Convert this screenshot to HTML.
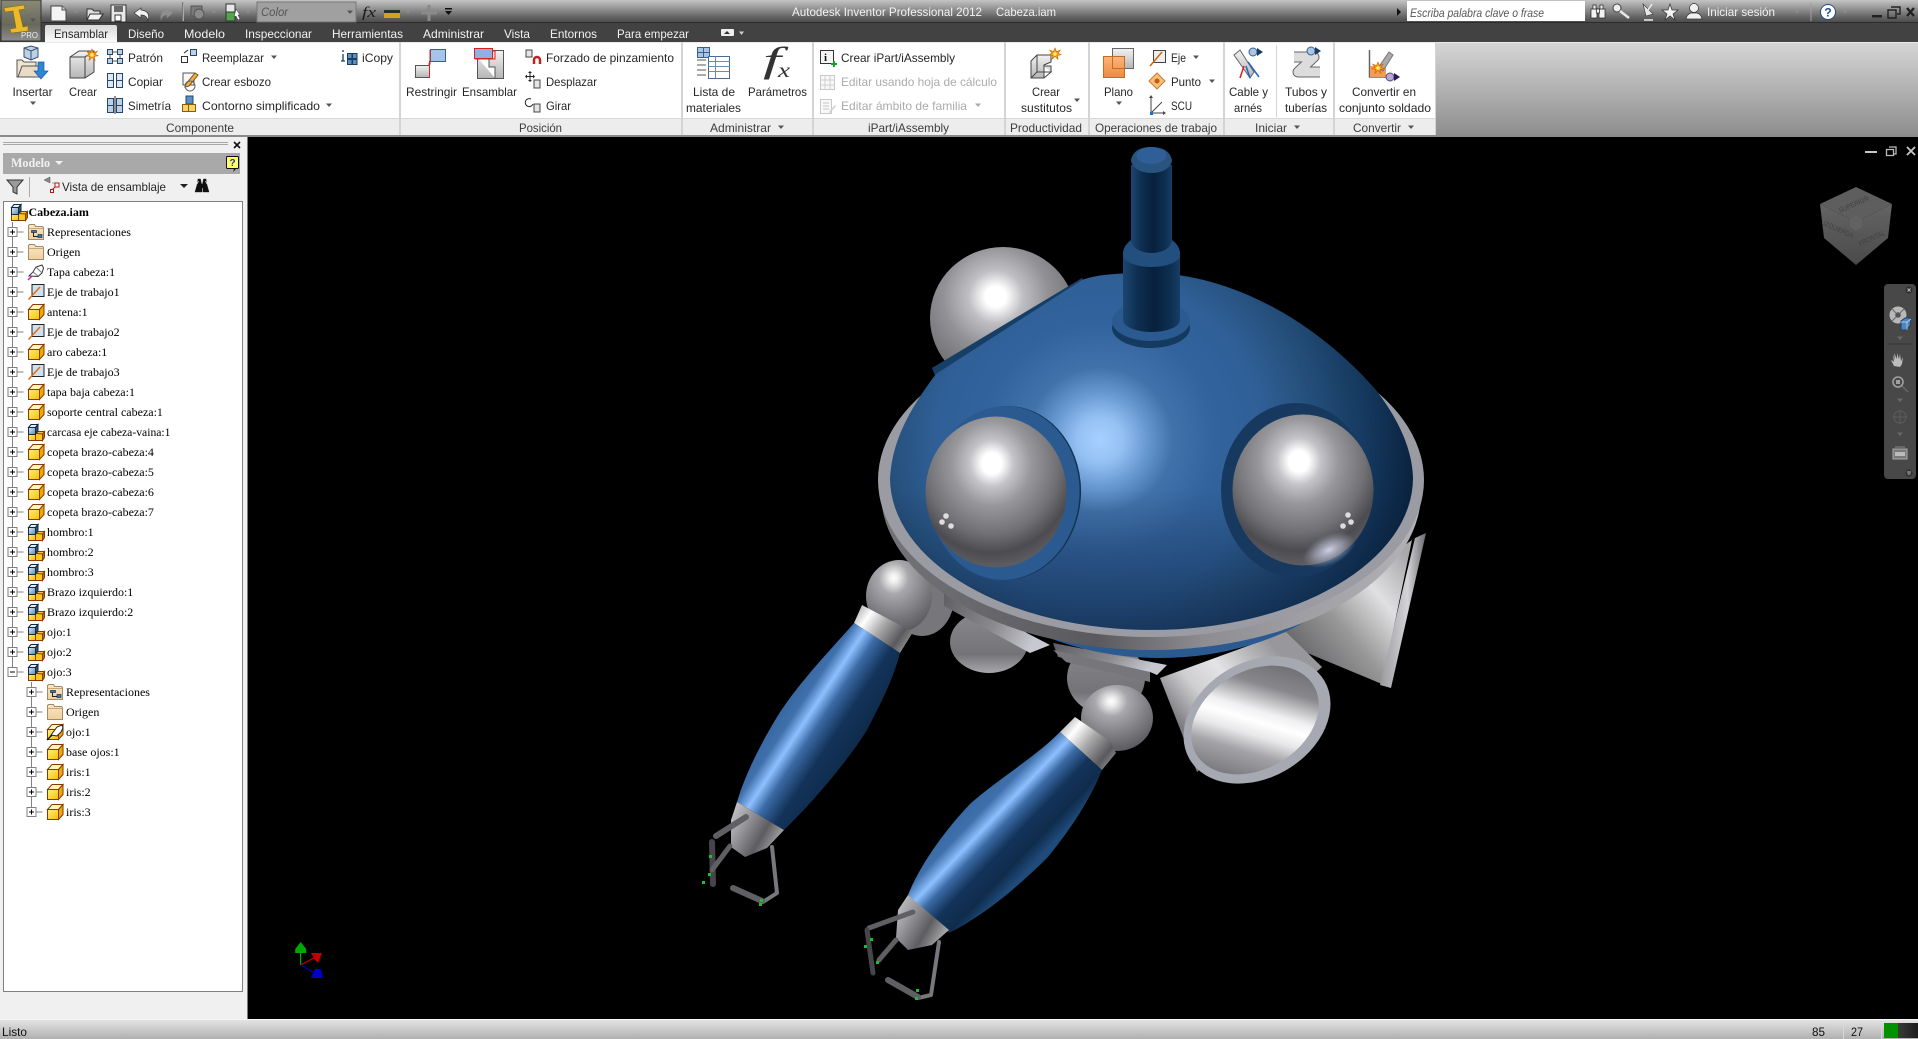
<!DOCTYPE html>
<html><head><meta charset="utf-8"><title>Autodesk Inventor Professional 2012 Cabeza.iam</title>
<style>
html,body{margin:0;padding:0;width:1918px;height:1039px;overflow:hidden;background:#000}
svg{display:block}
text{white-space:pre}
.r{font:12px "Liberation Sans",sans-serif;fill:#262626}
.g{font:12px "Liberation Sans",sans-serif;fill:#ababab}
.w{font:12px "Liberation Sans",sans-serif;fill:#f2f2f2}
.l{font:12px "Liberation Sans",sans-serif;fill:#3c3c3c}
.t{font:12px "Liberation Serif",serif;fill:#000}
</style></head><body>
<svg xmlns="http://www.w3.org/2000/svg" width="1918" height="1039" viewBox="0 0 1918 1039">
<defs>
<linearGradient id="tb" x1="0" y1="0" x2="0" y2="1"><stop offset="0" stop-color="#c4c4c4"/><stop offset=".35" stop-color="#979797"/><stop offset=".75" stop-color="#626262"/><stop offset="1" stop-color="#4a4a4a"/></linearGradient>
<linearGradient id="rg" x1="0" y1="0" x2="0" y2="1"><stop offset="0" stop-color="#d6d6d6"/><stop offset="1" stop-color="#8e8e8e"/></linearGradient>
<linearGradient id="sb" x1="0" y1="0" x2="0" y2="1"><stop offset="0" stop-color="#e6e6e6"/><stop offset="1" stop-color="#b0b0b0"/></linearGradient>
<linearGradient id="app" x1="0" y1="0" x2="0" y2="1"><stop offset="0" stop-color="#8a8a76"/><stop offset=".6" stop-color="#68685c"/><stop offset="1" stop-color="#8d8d8d"/></linearGradient>
<linearGradient id="tab" x1="0" y1="0" x2="0" y2="1"><stop offset="0" stop-color="#d8d8d8"/><stop offset="1" stop-color="#fbfbfb"/></linearGradient>
<radialGradient id="dome" gradientUnits="userSpaceOnUse" cx="1100" cy="440" r="330"><stop offset="0" stop-color="#a6d0ff"/><stop offset=".07" stop-color="#94c0f4"/><stop offset=".14" stop-color="#6a9ad2"/><stop offset=".22" stop-color="#4172aa"/><stop offset=".35" stop-color="#33639d"/><stop offset=".5" stop-color="#2f5f96"/><stop offset=".62" stop-color="#27527f"/><stop offset=".8" stop-color="#163a60"/><stop offset=".95" stop-color="#0a2340"/><stop offset="1" stop-color="#08203a"/></radialGradient>
<linearGradient id="domeb" gradientUnits="userSpaceOnUse" x1="0" y1="490" x2="0" y2="632"><stop offset="0" stop-color="#0a1e3c" stop-opacity="0"/><stop offset="1" stop-color="#0a1e3c" stop-opacity=".55"/></linearGradient>
<radialGradient id="sph" cx=".47" cy=".31" r=".78"><stop offset="0" stop-color="#fff"/><stop offset=".09" stop-color="#fff"/><stop offset=".2" stop-color="#c4c4c8"/><stop offset=".36" stop-color="#98989c"/><stop offset=".6" stop-color="#717175"/><stop offset=".76" stop-color="#4c4c50"/><stop offset=".9" stop-color="#606064"/><stop offset="1" stop-color="#b4b4bc"/></radialGradient>
<radialGradient id="refl"><stop offset="0" stop-color="#d6d8ee" stop-opacity=".95"/><stop offset=".55" stop-color="#b8bad0" stop-opacity=".55"/><stop offset="1" stop-color="#a0a0b0" stop-opacity="0"/></radialGradient>
<radialGradient id="sphb" cx=".45" cy=".35" r=".72"><stop offset="0" stop-color="#fff"/><stop offset=".1" stop-color="#fff"/><stop offset=".26" stop-color="#bfbfc3"/><stop offset=".5" stop-color="#929296"/><stop offset="1" stop-color="#5c5c60"/></radialGradient>
<radialGradient id="sphs" cx=".42" cy=".25" r=".8"><stop offset="0" stop-color="#fff"/><stop offset=".08" stop-color="#eee"/><stop offset=".28" stop-color="#a8a8ac"/><stop offset=".7" stop-color="#77777b"/><stop offset="1" stop-color="#55555a"/></radialGradient>
<linearGradient id="sphl" x1="0" y1="0" x2="0" y2="1"><stop offset="0" stop-color="#8a8a8e"/><stop offset=".7" stop-color="#747478"/><stop offset="1" stop-color="#a8a8ac"/></linearGradient>
<linearGradient id="a1" gradientUnits="userSpaceOnUse" x1="765" y1="697" x2="865" y2="763"><stop offset="0" stop-color="#2b5b94"/><stop offset=".28" stop-color="#3f70ab"/><stop offset=".39" stop-color="#8ebfff"/><stop offset=".5" stop-color="#3a6aa4"/><stop offset=".66" stop-color="#13335a"/><stop offset=".85" stop-color="#0f2c4c"/><stop offset="1" stop-color="#1f4a7a"/></linearGradient>
<linearGradient id="a2" gradientUnits="userSpaceOnUse" x1="958" y1="775" x2="1042" y2="855"><stop offset="0" stop-color="#2b5b94"/><stop offset=".36" stop-color="#3f70ab"/><stop offset=".48" stop-color="#8ebfff"/><stop offset=".58" stop-color="#3a6aa4"/><stop offset=".72" stop-color="#13335a"/><stop offset=".88" stop-color="#0f2c4c"/><stop offset="1" stop-color="#1f4a7a"/></linearGradient>
<linearGradient id="sl1" gradientUnits="userSpaceOnUse" x1="855" y1="600" x2="910" y2="640"><stop offset="0" stop-color="#8a8a8e"/><stop offset=".3" stop-color="#fff"/><stop offset=".55" stop-color="#aaa"/><stop offset=".85" stop-color="#5a5a5e"/><stop offset="1" stop-color="#888"/></linearGradient>
<linearGradient id="sl2" gradientUnits="userSpaceOnUse" x1="1060" y1="715" x2="1115" y2="760"><stop offset="0" stop-color="#8a8a8e"/><stop offset=".3" stop-color="#fff"/><stop offset=".55" stop-color="#aaa"/><stop offset=".85" stop-color="#5a5a5e"/><stop offset="1" stop-color="#888"/></linearGradient>
<linearGradient id="wr" x1="0" y1="0" x2="1" y2=".6"><stop offset="0" stop-color="#cfcfd2"/><stop offset=".35" stop-color="#9a9a9e"/><stop offset=".7" stop-color="#5d5d61"/><stop offset="1" stop-color="#aaa"/></linearGradient>
<linearGradient id="ant" x1="0" y1="0" x2="1" y2="0"><stop offset="0" stop-color="#1c4670"/><stop offset=".25" stop-color="#0e2f52"/><stop offset=".55" stop-color="#08203c"/><stop offset=".85" stop-color="#0e3053"/><stop offset="1" stop-color="#163f66"/></linearGradient>
<linearGradient id="tube" gradientUnits="userSpaceOnUse" x1="1195" y1="745" x2="1290" y2="665"><stop offset="0" stop-color="#7a7a7e"/><stop offset=".3" stop-color="#cfcfd2"/><stop offset=".55" stop-color="#e4e4e6"/><stop offset=".8" stop-color="#b8b8bb"/><stop offset="1" stop-color="#98989c"/></linearGradient>
<linearGradient id="inner" gradientUnits="userSpaceOnUse" x1="1205" y1="765" x2="1305" y2="670"><stop offset="0" stop-color="#707074"/><stop offset=".25" stop-color="#a4a4a8"/><stop offset=".38" stop-color="#e8e8ea"/><stop offset=".48" stop-color="#fff"/><stop offset=".56" stop-color="#f0f0f2"/><stop offset=".75" stop-color="#88888c"/><stop offset="1" stop-color="#68686c"/></linearGradient>
<linearGradient id="cone" gradientUnits="userSpaceOnUse" x1="1290" y1="660" x2="1410" y2="560"><stop offset="0" stop-color="#5e5e62"/><stop offset=".4" stop-color="#999"/><stop offset=".7" stop-color="#e0e0e2"/><stop offset="1" stop-color="#a9a9ad"/></linearGradient>
<linearGradient id="flng" x1="0" y1="0" x2="1" y2="0"><stop offset="0" stop-color="#9a9a9e"/><stop offset=".6" stop-color="#d4d4d8"/><stop offset="1" stop-color="#6a6a6e"/></linearGradient>
<linearGradient id="band" x1="0" y1="0" x2="1" y2="0"><stop offset="0" stop-color="#747478"/><stop offset=".4" stop-color="#5a5a5e"/><stop offset=".6" stop-color="#8d8d92"/><stop offset="1" stop-color="#b3b3b8"/></linearGradient>
<linearGradient id="plate" x1="0" y1="0" x2="1" y2=".3"><stop offset="0" stop-color="#5e5e62"/><stop offset=".6" stop-color="#8c8c90"/><stop offset="1" stop-color="#c8c8d0"/></linearGradient>
<linearGradient id="cubeF" x1="0" y1="0" x2="0" y2="1"><stop offset="0" stop-color="#646464"/><stop offset="1" stop-color="#4a4a4a"/></linearGradient>
<linearGradient id="yl" x1="0" y1="0" x2="1" y2="1"><stop offset="0" stop-color="#fff27a"/><stop offset="1" stop-color="#f2c200"/></linearGradient>
<linearGradient id="blc" x1="0" y1="0" x2="1" y2="1"><stop offset="0" stop-color="#dfeaf5"/><stop offset="1" stop-color="#5e87b5"/></linearGradient>
<linearGradient id="fd" x1="0" y1="0" x2="0" y2="1"><stop offset="0" stop-color="#fbe6c4"/><stop offset="1" stop-color="#f0d09c"/></linearGradient>
<linearGradient id="grc" x1="0" y1="0" x2="0" y2="1"><stop offset="0" stop-color="#f2f2f2"/><stop offset="1" stop-color="#b5b5b5"/></linearGradient>
<linearGradient id="or" x1="0" y1="0" x2="0" y2="1"><stop offset="0" stop-color="#fbb47c"/><stop offset="1" stop-color="#ee8a3f"/></linearGradient>
<linearGradient id="pb" x1="0" y1="0" x2="1" y2="0"><stop offset="0" stop-color="#3a3a3a"/><stop offset="1" stop-color="#1c1c1c"/></linearGradient>

<g id="part"><path d="M.5 5.5h11v10H.5z" fill="url(#yl)" stroke="#8a3a00"/><path d="M.5 5.5 5 .5h11l-4.500 5z" fill="#fff7b8" stroke="#8a3a00"/><path d="M11.500 5.500 16 .5v10l-4.500 5z" fill="#f0a800" stroke="#8a3a00"/></g>
<g id="asm"><path d="M.5 9.500h7v7h-7z" fill="url(#yl)" stroke="#8a3a00"/><path d="M7.500 9.500h7v7h-7z" fill="#f7c91a" stroke="#8a3a00"/><path d="M8 9.500 10 7.500h6.500L14.500 10z" fill="#f0c060" stroke="#8a3a00"/><path d="M14.500 10l2-2.500v6l-2 3z" fill="#b87000" stroke="#8a3a00"/><path d="M.5 3.500h7v7h-7z" fill="url(#blc)" stroke="#102840"/><path d="M.5 3.500 3 .5h7l-2.500 3z" fill="#e6eef7" stroke="#102840"/><path d="M7.500 3.500 10 .5v6l-2.500 3z" fill="#33567d" stroke="#102840"/></g>
<g id="fold"><path d="M.5 15.500V1.500l1-1h5l1 2h7l1 1v12z" fill="url(#fd)" stroke="#a08a6a"/><path d="M.5 4.500h15" stroke="#c7a877" fill="none"/></g>
<g id="rep"><use href="#fold"/><path d="M3.500 6.500h5v2h-5zM10 10.500h4v3h-4z" fill="#3a78a8" stroke="#1c3a55" stroke-width=".7"/><path d="M5.500 8.500v4h4.500" fill="none" stroke="#222"/></g>
<g id="axis"><rect x="4" y=".5" width="12" height="12" fill="#cfe0f0" stroke="#222"/><path d="M.5 15.500 12 3" stroke="#e26f10" stroke-width="1.600" fill="none"/></g>
<g id="pin"><path d="M1 12 5 8l3-5 6-2 1.500 3L14 9l-4 3.500z" fill="#fff" stroke="#333"/><path d="M0 16l4-4" stroke="#d61fb0" stroke-width="1.500"/><path d="M5 8l5 4M8 3l6 6" stroke="#777"/></g>
<g id="pinp"><use href="#part"/><path d="M4 11 7 7l3-4 5-2 1 3-2 4-4 4z" fill="#fff" stroke="#222"/><path d="M0 16l5-5" stroke="#111" stroke-width="1.300"/></g>
<g id="pl"><rect x="-4.500" y="-4.500" width="9" height="9" fill="#fff" stroke="#808080"/><path d="M-2.500 0h5M0-2.500v5" stroke="#000"/></g>
<g id="mn"><rect x="-4.500" y="-4.500" width="9" height="9" fill="#fff" stroke="#808080"/><path d="M-2.500 0h5" stroke="#000"/></g>
<path id="dd" d="M-3-1.500h6L0 2z" fill="#555"/>
<path id="ddl" d="M-3-1.500h6L0 2z" fill="#a8a8a8"/>
<path id="ddt" d="M-3-1.500h6L0 2z" fill="#8a8a8a"/>
<g id="star"><path d="M0-6 1.500-2.300 5.300-3.800 3-.8 6 .8 2.300 1.500 3 5.300 0 2.300-3 5.300-2.300 1.500-6 .8-3-.8-5.300-3.800-1.500-2.300z" fill="#f2a112" stroke="#c96400" stroke-width=".6"/><circle r="1.700" fill="#fff176"/></g>
</defs>

<!-- base -->
<rect width="1918" height="1039" fill="#000"/>

<!-- 3D model -->
<g>
<ellipse cx="1003" cy="318" rx="73" ry="71" fill="url(#sphb)"/>
<ellipse cx="989" cy="642" rx="39" ry="31" fill="url(#sphl)"/>
<ellipse cx="1106" cy="678" rx="39" ry="36" fill="url(#sphl)"/>
<ellipse cx="922" cy="598" rx="32" ry="38" fill="#77777b"/>
<ellipse cx="899" cy="596" rx="33" ry="36" fill="url(#sphs)"/>
<ellipse cx="1117" cy="718" rx="36" ry="33" fill="url(#sphs)"/>
<!-- cone -->
<path d="M1412 540 1382 684 1288 645 1255 615 1370 570z" fill="url(#cone)"/>
<path d="M1415 538 1426 533 1391 688 1380 685z" fill="url(#flng)"/>
<!-- tube -->
<path d="M1160 678 1286 632 1322 667 1197 772z" fill="url(#tube)"/>
<g transform="rotate(-30 1257 720)"><ellipse cx="1257" cy="720" rx="78" ry="58" fill="#a6a8b2"/></g>
<g transform="rotate(-30 1255 720)"><ellipse cx="1255" cy="720" rx="68" ry="49" fill="url(#inner)"/></g>
<!-- plates -->
<path d="M944 590 1050 645 1030 653 944 606z" fill="url(#plate)"/>
<path d="M1053 643 1167 665 1157 675 1150 672 1058 657z" fill="url(#plate)"/>
<path d="M1053 650 1150 672 1150 682 1066 662z" fill="#77777b"/>
<!-- under blue + band -->
<ellipse cx="1160" cy="480" rx="240" ry="178" fill="#2b5a90"/>
<ellipse cx="1151" cy="493" rx="270" ry="157" fill="url(#band)"/>
<!-- ring -->
<ellipse cx="1151" cy="480" rx="273" ry="157" fill="#9b9ba3"/>
<!-- dome -->
<path d="M932 368 1082 278 1086 285 936 378z" fill="#173f66"/>
<path d="M890 478C892 445 905 415 936 374L1082 280C1095 275 1115 273 1151 273C1225 274 1310 315 1376 390C1395 415 1412 445 1413 478A261.500 152 0 0 1 890 478Z" fill="url(#dome)"/>
<path d="M890 478A261.500 152 0 0 0 1413 478Z" fill="url(#domeb)"/>
<!-- left eye -->
<ellipse cx="1006" cy="493" rx="75" ry="87" transform="rotate(4 1006 493)" fill="#12324f"/>
<ellipse cx="1004.500" cy="493" rx="75" ry="87" transform="rotate(4 1004.500 493)" fill="#2b5a90"/>
<ellipse cx="996" cy="492" rx="70.500" ry="75.500" fill="url(#sph)"/>
<!-- right eye -->
<ellipse cx="1296" cy="490" rx="75" ry="87" fill="#17395f"/>
<ellipse cx="1303" cy="490" rx="70.500" ry="75.500" fill="url(#sph)"/>
<ellipse cx="1329" cy="550" rx="28" ry="15" transform="rotate(-25 1329 550)" fill="url(#refl)"/>
<g fill="#ddd"><circle cx="946" cy="516" r="2.800"/><circle cx="942" cy="522" r="2.800"/><circle cx="951" cy="526" r="2.800"/><circle cx="1348" cy="515" r="2.800"/><circle cx="1351" cy="522" r="2.800"/><circle cx="1343" cy="526" r="2.800"/></g>
<!-- antenna -->
<ellipse cx="1151" cy="328" rx="39" ry="20" fill="#143a60"/>
<ellipse cx="1151" cy="321" rx="39" ry="20" fill="#2b5a90"/>
<path d="M1123 255H1180V320A28.500 12 0 0 1 1123 320Z" fill="url(#ant)"/>
<path d="M1123 252Q1124 245 1131 240H1172Q1179 245 1180 252V255A28.500 12 0 0 1 1123 255Z" fill="#234f7e"/>
<path d="M1131 165H1172V240A20.500 13 0 0 1 1131 240Z" fill="url(#ant)"/>
<path d="M1131 160Q1134 147 1151 147Q1169 147 1172 160A20.500 13 0 0 1 1131 160Z" fill="#2a5480"/>
<ellipse cx="1151.500" cy="155.500" rx="15" ry="8.500" fill="#2f5f96"/>
<!-- left arm -->
<path d="M862 605 913 632 900 653 854 623z" fill="url(#sl1)"/>
<path d="M854 623C840 640 800 680 777 717C760 745 745 775 737 802L784 830C810 805 845 765 867 730C880 705 893 680 900 653Z" fill="url(#a1)"/>
<path d="M737 802 784 830 767 848 745 857 731 847 731 820z" fill="url(#wr)"/>
<!-- left gripper -->
<g fill="none" stroke="#5f5f64" stroke-linecap="round" stroke-linejoin="round">
<path d="M746 817 716 836" stroke-width="6"/>
<path d="M712 842 713 884" stroke-width="6" stroke="#46464a"/>
<path d="M730 846 712 870" stroke-width="5"/>
<path d="M772 847 777 893 763 902" stroke-width="4" stroke="#77777c"/>
<path d="M762 901 733 888" stroke-width="6"/>
</g>
<g fill="#18c030"><rect x="709" y="855" width="3" height="3"/><rect x="708" y="873" width="3" height="3"/><rect x="702" y="881" width="3" height="3"/><rect x="760" y="899" width="3" height="3"/><rect x="759" y="903" width="3" height="3"/></g>
<!-- right arm -->
<path d="M1075 717 1111 742 1116 753 1102 770 1060 732z" fill="url(#sl2)"/>
<path d="M1060 732C1035 757 1000 778 971 803C945 830 920 865 908 895L949 933C985 915 1020 885 1048 857C1070 830 1090 800 1102 770Z" fill="url(#a2)"/>
<path d="M908 895 949 930 932 945 908 950 896 938 898 910z" fill="url(#wr)"/>
<g fill="none" stroke="#5f5f64" stroke-linecap="round" stroke-linejoin="round">
<path d="M913 912 869 928" stroke-width="5"/>
<path d="M867 930 873 973" stroke-width="5" stroke="#46464a"/>
<path d="M896 940 879 960" stroke-width="5"/>
<path d="M939 942 931 995 918 998" stroke-width="4" stroke="#77777c"/>
<path d="M918 997 888 980" stroke-width="6"/>
</g>
<g fill="#18c030"><rect x="870" y="938" width="3" height="3"/><rect x="864" y="945" width="3" height="3"/><rect x="876" y="961" width="3" height="3"/><rect x="916" y="989" width="3" height="3"/><rect x="915" y="997" width="3" height="3"/></g>
</g>

<!-- view cube -->
<path d="M1856 187 1892 204 1856 222 1820 204z" fill="#5e5e5e"/>
<path d="M1820 204 1856 222V265L1824 238z" fill="url(#cubeF)"/>
<path d="M1892 204 1856 222V265L1888 238z" fill="url(#cubeF)"/>
<path d="M1850 219 1856 216 1862 219V227L1856 231 1850 227z" fill="#626262"/>
<text transform="translate(1840 213) rotate(-24)" font-family="Liberation Sans,sans-serif" font-size="7" fill="#404040" textLength="32" lengthAdjust="spacingAndGlyphs">SUPERIOR</text>
<text transform="translate(1823 225) rotate(24)" font-family="Liberation Sans,sans-serif" font-size="7" fill="#404040" textLength="32" lengthAdjust="spacingAndGlyphs">IZQUIERDA</text>
<text transform="translate(1860 246) rotate(-24)" font-family="Liberation Sans,sans-serif" font-size="7" fill="#404040" textLength="28" lengthAdjust="spacingAndGlyphs">FRONTAL</text>
<!-- canvas window buttons -->
<rect x="1865" y="151" width="12" height="2" fill="#c8c8c8"/>
<path d="M1889 147h7v7h-2M1886.500 149.500h7v6h-7z" fill="none" stroke="#bbb" stroke-width="1.300"/>
<path d="M1907 147l8 8m0-8-8 8" stroke="#c8c8c8" stroke-width="1.800"/>
<!-- nav bar -->
<rect x="1884" y="284" width="32" height="195" rx="4" fill="#484848"/>
<circle cx="1909" cy="290" r="3.500" fill="#2f2f2f"/><path d="M1907.500 288.500l3 3m0-3-3 3" stroke="#bbb"/>
<circle cx="1898" cy="315" r="8.500" fill="#b8b8b8"/><circle cx="1898" cy="315" r="2.800" fill="#555"/><path d="M1892 309l4 4m8-4-4 4m-8 8 4-4" stroke="#666"/>
<path d="M1901 321l4-3h6l-1 8-4 4h-5z" fill="#4f86bd" stroke="#1f3f66"/>
<path d="M1901 322h6l4-3M1907 322v8" stroke="#cfe0ef" fill="none" stroke-width=".7"/>
<path d="M1887 344h26" stroke="#333"/>
<use href="#ddt" x="1900" y="338" opacity=".5"/>
<path d="M1894 366l-3-6 2 1 1 1-1-7 2 5-1-7 3 6v-6l2 6 1-5 1 7 2-4-1 7-2 3z" fill="#bcbcbc"/>
<circle cx="1898" cy="382" r="5" fill="none" stroke="#a0a0a0" stroke-width="1.600"/><rect x="1896" y="380" width="4" height="4" fill="#a0a0a0"/><path d="M1902 386l6 6" stroke="#6c6c6c" stroke-width="1.300"/>
<use href="#ddt" x="1900" y="400" opacity=".5"/>
<path d="M1893 417h14M1900 410v14" stroke="#5c5c5c"/><circle cx="1900" cy="417" r="6" fill="none" stroke="#5c5c5c"/>
<use href="#ddt" x="1900" y="434" opacity=".5"/>
<path d="M1893 449h14v10h-14z" fill="#7a7a7a" stroke="#a8a8a8"/><rect x="1895" y="452" width="10" height="4" fill="#bbb"/><path d="M1895 447h10" stroke="#888"/>
<circle cx="1909" cy="473" r="3.500" fill="#2f2f2f"/><path d="M1907 472h4M1907.500 474h3" stroke="#bbb"/>

<!-- triad -->
<path d="M300.700 965V950" stroke="#00d000"/><path d="M300.700 942l-5.500 7v4h11v-4z" fill="#00a800"/>
<path d="M300.700 965l15-8" stroke="#d00000"/><path d="M311 953h11l-4 10-3-3z" fill="#c00000"/>
<path d="M300.700 965l14 8" stroke="#0000d0"/><path d="M315 969h6l2 9h-12z" fill="#0000c8"/>

<!-- title bar -->
<rect width="1918" height="23" fill="url(#tb)"/>
<rect y="23" width="1918" height="19" fill="#424242"/>
<rect y="22" width="1918" height="1" fill="#2c2c2c"/>
<!-- app button -->
<rect x="1" y="0" width="40" height="41" fill="url(#app)" stroke="#333"/>
<path d="M4 8 24 5 25 9 19 10 23 27 28 26 28 31 11 33 10 29 16 28 13 11 5 12z" fill="#ecb92a" stroke="#8f6a0a" stroke-width=".6"/>
<text x="21" y="38" font-family="Liberation Sans,sans-serif" font-size="8" fill="#f0f0f0" textLength="17" lengthAdjust="spacingAndGlyphs">PRO</text>
<use href="#dd" x="33" y="20"/>
<!-- QAT -->
<path d="M51 6h11l4 4v11H51z" fill="#f4f4f4" stroke="#444"/><path d="M62 6v4h4" fill="#ccc" stroke="#555"/>
<use href="#ddt" x="76" y="12"/>
<path d="M87 9h5l2 2h6v3h3l-4 6H87z" fill="#dedede" stroke="#333"/><path d="M90 14h13l-4 6H87z" fill="#f2f2f2" stroke="#333"/>
<path d="M111 5h15v17h-15z" fill="#e8e8e8" stroke="#333"/><rect x="114" y="6" width="9" height="6" fill="#6a6a6a"/><rect x="115" y="15" width="6" height="6" fill="#fff" stroke="#333"/>
<path d="M141 8l-7 5 7 5v-3q6 0 7 6 3-10-7-11z" fill="#f2f2f2" stroke="#333" stroke-width=".7"/>
<path d="M167 8l6 5-6 5v-3q-5 0-6 6-2-10 6-11z" fill="#8f8f8f"/>
<path d="M182.500 2v19" stroke="#777"/><path d="M183.500 2v19" stroke="#aaa"/>
<rect x="191" y="6" width="11" height="10" fill="#7c7c7c" stroke="#555"/><circle cx="199" cy="14" r="5" fill="#8a8a8a" stroke="#555"/><path d="M190 21h15" stroke="#555"/>
<use href="#ddt" x="214" y="12"/>
<rect x="226" y="4" width="9" height="8" fill="#e8e8e8" stroke="#333"/><rect x="226" y="12" width="9" height="9" fill="#4fa54a" stroke="#333"/><path d="M236 9l4 6-2 0 2 4-2 1-2-4-2 1z" fill="#fff" stroke="#333" stroke-width=".5"/>
<use href="#ddt" x="248" y="12"/>
<rect x="257" y="2" width="99" height="20" fill="#a0a0a0" stroke="#777"/>
<text x="261" y="16" font-family="Liberation Sans,sans-serif" font-size="12" font-style="italic" fill="#555" textLength="27" lengthAdjust="spacingAndGlyphs">Color</text>
<use href="#dd" x="350" y="12"/>
<text x="362" y="17" font-family="Liberation Serif,serif" font-size="15" font-style="italic" fill="#1a1a1a" textLength="14" lengthAdjust="spacingAndGlyphs">fx</text>
<rect x="384" y="10" width="16" height="3" fill="#2c2c2c"/><rect x="384" y="13" width="16" height="5" fill="#d4a020"/>
<use href="#ddt" x="408" y="12"/>
<path d="M429 5v16M421 13h16" stroke="#8a8a8a" stroke-width="3"/>
<path d="M445 8h7v1.500h-7zM445 11h7l-3.500 4z" fill="#111"/>
<!-- title text -->
<text x="792" y="16" class="w" textLength="190" lengthAdjust="spacingAndGlyphs">Autodesk Inventor Professional 2012</text>
<text x="996" y="16" class="w" textLength="60" lengthAdjust="spacingAndGlyphs">Cabeza.iam</text>
<path d="M1397 8v8l4-4z" fill="#111"/>
<rect x="1407" y="1" width="178" height="20" fill="#fff"/>
<text x="1410" y="17" font-family="Liberation Sans,sans-serif" font-size="11.500" font-style="italic" fill="#555" textLength="134" lengthAdjust="spacingAndGlyphs">Escriba palabra clave o frase</text>
<!-- right tools -->
<g fill="#f2f2f2" stroke="#222" stroke-width=".7"><rect x="1591" y="9" width="6" height="9"/><rect x="1599" y="9" width="6" height="9"/><rect x="1593" y="5" width="3" height="4"/><rect x="1600" y="5" width="3" height="4"/><rect x="1596.500" y="9" width="3" height="4"/></g>
<circle cx="1617" cy="8" r="4" fill="#eee" stroke="#444"/><path d="M1620 11l9 7" stroke="#e8e8e8" stroke-width="2.500"/>
<path d="M1643 4l10 10-7 2z" fill="#e8e8e8" stroke="#333" stroke-width=".6"/><path d="M1648 10l4-6M1644 20h9" stroke="#eee" stroke-width="1.500"/>
<path d="M1670 4l2 6h6l-5 4 2 6-5-4-5 4 2-6-5-4h6z" fill="#f4f4f4" stroke="#333" stroke-width=".7"/>
<circle cx="1694" cy="8" r="4.500" fill="#f0f0f0" stroke="#333" stroke-width=".7"/><path d="M1686 19q1-5 5-6h6q4 1 5 6z" fill="#f0f0f0" stroke="#333" stroke-width=".7"/>
<text x="1707" y="16" class="w" textLength="68" lengthAdjust="spacingAndGlyphs">Iniciar sesión</text>
<use href="#ddt" x="1797" y="12"/>
<path d="M1811 2v19" stroke="#a0a0a0"/>
<circle cx="1828" cy="12" r="7.500" fill="#fff" stroke="#2b4a7a"/>
<text x="1828" y="16.500" text-anchor="middle" font-family="Liberation Sans,sans-serif" font-size="12" font-weight="bold" fill="#1c4fa8">?</text>
<use href="#ddt" x="1845" y="12"/>
<rect x="1872" y="15" width="10" height="2.500" fill="#222"/>
<path d="M1891 7h9v7h-3M1888 10h8v8h-8z" fill="none" stroke="#222" stroke-width="1.400"/>
<path d="M1907 8l7 8m0-8-7 8" stroke="#222" stroke-width="2.400"/>

<!-- tabs -->
<path d="M45 42V27q0-2 2-2h68q2 0 2 2v15z" fill="url(#tab)"/>
<text x="54" y="38" class="r" textLength="54" lengthAdjust="spacingAndGlyphs">Ensamblar</text>
<g class="w">
<text x="128" y="38" class="w" textLength="36" lengthAdjust="spacingAndGlyphs">Diseño</text>
<text x="184" y="38" class="w" textLength="41" lengthAdjust="spacingAndGlyphs">Modelo</text>
<text x="245" y="38" class="w" textLength="67" lengthAdjust="spacingAndGlyphs">Inspeccionar</text>
<text x="332" y="38" class="w" textLength="71" lengthAdjust="spacingAndGlyphs">Herramientas</text>
<text x="423" y="38" class="w" textLength="61" lengthAdjust="spacingAndGlyphs">Administrar</text>
<text x="504" y="38" class="w" textLength="26" lengthAdjust="spacingAndGlyphs">Vista</text>
<text x="550" y="38" class="w" textLength="47" lengthAdjust="spacingAndGlyphs">Entornos</text>
<text x="617" y="38" class="w" textLength="72" lengthAdjust="spacingAndGlyphs">Para empezar</text>
</g>
<rect x="721" y="29" width="13" height="7" rx="1" fill="#eee"/><path d="M724 34l3-3 3 3z" fill="#333"/><path d="M739 31.500h5L741.500 35z" fill="#ccc"/>

<!-- ribbon -->
<rect y="42" width="1436" height="76" fill="#fff"/>
<rect y="118" width="1436" height="17" fill="#ededed"/>
<rect y="118" width="1436" height="1" fill="#d8d8d8"/>
<rect x="1436" y="42" width="482" height="93" fill="url(#rg)"/>
<rect y="42" width="1918" height="1" fill="#e8e8e8"/>
<rect y="135" width="1918" height="2" fill="#8a8a8a"/>
<g fill="#d4d4d4"><rect x="399" y="42" width="2" height="93"/><rect x="681" y="42" width="2" height="93"/><rect x="812" y="42" width="2" height="93"/><rect x="1004" y="42" width="2" height="93"/><rect x="1088" y="42" width="2" height="93"/><rect x="1223" y="42" width="2" height="93"/><rect x="1333" y="42" width="2" height="93"/><rect x="1435" y="42" width="1" height="93"/><rect x="1276" y="45" width="1" height="72"/></g>

<!-- ribbon text -->
<text x="12.500" y="96" class="r" textLength="40" lengthAdjust="spacingAndGlyphs">Insertar</text>
<use href="#dd" x="33" y="103"/>
<text x="69" y="96" class="r" textLength="28" lengthAdjust="spacingAndGlyphs">Crear</text>
<text x="128" y="62" class="r" textLength="35" lengthAdjust="spacingAndGlyphs">Patrón</text>
<text x="128" y="86" class="r" textLength="35" lengthAdjust="spacingAndGlyphs">Copiar</text>
<text x="128" y="110" class="r" textLength="43" lengthAdjust="spacingAndGlyphs">Simetría</text>
<text x="202" y="62" class="r" textLength="62" lengthAdjust="spacingAndGlyphs">Reemplazar</text><use href="#dd" x="274" y="57"/>
<text x="202" y="86" class="r" textLength="69" lengthAdjust="spacingAndGlyphs">Crear esbozo</text>
<text x="202" y="110" class="r" textLength="118" lengthAdjust="spacingAndGlyphs">Contorno simplificado</text><use href="#dd" x="329" y="105"/>
<text x="362" y="62" class="r" textLength="31" lengthAdjust="spacingAndGlyphs">iCopy</text>
<text x="406" y="96" class="r" textLength="51" lengthAdjust="spacingAndGlyphs">Restringir</text>
<text x="462" y="96" class="r" textLength="55" lengthAdjust="spacingAndGlyphs">Ensamblar</text>
<text x="546" y="62" class="r" textLength="128" lengthAdjust="spacingAndGlyphs">Forzado de pinzamiento</text>
<text x="546" y="86" class="r" textLength="51" lengthAdjust="spacingAndGlyphs">Desplazar</text>
<text x="546" y="110" class="r" textLength="25" lengthAdjust="spacingAndGlyphs">Girar</text>
<text x="693" y="96" class="r" textLength="42" lengthAdjust="spacingAndGlyphs">Lista de</text>
<text x="686" y="112" class="r" textLength="55" lengthAdjust="spacingAndGlyphs">materiales</text>
<text x="748" y="96" class="r" textLength="59" lengthAdjust="spacingAndGlyphs">Parámetros</text>
<text x="841" y="62" class="r" textLength="114" lengthAdjust="spacingAndGlyphs">Crear iPart/iAssembly</text>
<text x="841" y="86" class="g" textLength="156" lengthAdjust="spacingAndGlyphs">Editar usando hoja de cálculo</text>
<text x="841" y="110" class="g" textLength="126" lengthAdjust="spacingAndGlyphs">Editar ámbito de familia</text><use href="#ddl" x="978" y="105"/>
<text x="1032" y="96" class="r" textLength="28" lengthAdjust="spacingAndGlyphs">Crear</text>
<text x="1021" y="112" class="r" textLength="51" lengthAdjust="spacingAndGlyphs">sustitutos</text><use href="#dd" x="1077" y="100"/>
<text x="1104" y="96" class="r" textLength="29" lengthAdjust="spacingAndGlyphs">Plano</text><use href="#dd" x="1119" y="103"/>
<text x="1171" y="62" class="r" textLength="15" lengthAdjust="spacingAndGlyphs">Eje</text><use href="#dd" x="1196" y="57"/>
<text x="1171" y="86" class="r" textLength="30" lengthAdjust="spacingAndGlyphs">Punto</text><use href="#dd" x="1212" y="81"/>
<text x="1171" y="110" class="r" textLength="21" lengthAdjust="spacingAndGlyphs">SCU</text>
<text x="1229" y="96" class="r" textLength="39" lengthAdjust="spacingAndGlyphs">Cable y</text>
<text x="1234" y="112" class="r" textLength="28" lengthAdjust="spacingAndGlyphs">arnés</text>
<text x="1285" y="96" class="r" textLength="42" lengthAdjust="spacingAndGlyphs">Tubos y</text>
<text x="1285" y="112" class="r" textLength="42" lengthAdjust="spacingAndGlyphs">tuberías</text>
<text x="1352" y="96" class="r" textLength="64" lengthAdjust="spacingAndGlyphs">Convertir en</text>
<text x="1339" y="112" class="r" textLength="92" lengthAdjust="spacingAndGlyphs">conjunto soldado</text>
<!-- panel labels -->
<text x="166" y="132" class="l" textLength="68" lengthAdjust="spacingAndGlyphs">Componente</text>
<text x="519" y="132" class="l" textLength="43" lengthAdjust="spacingAndGlyphs">Posición</text>
<text x="710" y="132" class="l" textLength="61" lengthAdjust="spacingAndGlyphs">Administrar</text><use href="#dd" x="781" y="127"/>
<text x="868" y="132" class="l" textLength="81" lengthAdjust="spacingAndGlyphs">iPart/iAssembly</text>
<text x="1010" y="132" class="l" textLength="72" lengthAdjust="spacingAndGlyphs">Productividad</text>
<text x="1095" y="132" class="l" textLength="122" lengthAdjust="spacingAndGlyphs">Operaciones de trabajo</text>
<text x="1255" y="132" class="l" textLength="32" lengthAdjust="spacingAndGlyphs">Iniciar</text><use href="#dd" x="1297" y="127"/>
<text x="1353" y="132" class="l" textLength="48" lengthAdjust="spacingAndGlyphs">Convertir</text><use href="#dd" x="1411" y="127"/>

<!-- ribbon icons -->
<!-- Insertar -->
<path d="M24 48l7-2 7 2v9l-7 3-7-3z" fill="#bcd0e6" stroke="#38536f"/><path d="M24 48l7 3 7-3M31 51v9" fill="none" stroke="#38536f"/>
<path d="M17 60h5l2 2h12v4H24l-3 11h-4z" fill="#f0e6d0" stroke="#555"/><path d="M22 66h21l-4 11H18z" fill="#e8dcc4" stroke="#555"/>
<path d="M38 62h6v9h4l-7 8-7-8h4z" fill="#2e86d6" stroke="#175a9c" stroke-width=".7"/>
<!-- Crear -->
<path d="M70 57l9-6h15v21l-9 6H70z" fill="url(#grc)" stroke="#444"/><path d="M70 57h15l9-6M85 57v21" fill="none" stroke="#444"/>
<use href="#star" x="92" y="55"/>
<!-- Patrón -->
<g fill="#bcd0e6" stroke="#24476a"><rect x="107.500" y="49.500" width="5" height="5"/><rect x="117.500" y="49.500" width="5" height="5"/><rect x="107.500" y="58.500" width="5" height="5"/><rect x="117.500" y="58.500" width="5" height="5"/></g><path d="M112.500 52h5M112.500 61h5M110 54.500v4M120 54.500v4" stroke="#555" fill="none"/>
<!-- Copiar -->
<g fill="#dce7f2" stroke="#24476a"><rect x="107.500" y="73.500" width="6" height="14"/><rect x="116.500" y="73.500" width="6" height="14"/></g><path d="M107.500 80.500h6M116.500 80.500h6" stroke="#24476a"/>
<!-- Simetría -->
<g fill="#bcd0e6" stroke="#24476a"><rect x="107.500" y="98.500" width="6" height="14"/><rect x="116.500" y="98.500" width="6" height="14"/></g><path d="M115 96v18" stroke="#222"/><path d="M107.500 105.500h6M116.500 105.500h6" stroke="#24476a"/>
<!-- Reemplazar -->
<rect x="181.500" y="56.500" width="6" height="6" fill="#fff" stroke="#333"/><rect x="190.500" y="49.500" width="6" height="6" fill="#bcd0e6" stroke="#24476a"/><path d="M184 53l4-3" stroke="#222"/>
<!-- Crear esbozo -->
<path d="M183 73h11v12h-11z" fill="#f8f8f8" stroke="#555"/><path d="M186 84l9-11 3 2-9 11-4 1z" fill="#f3b14b" stroke="#8a5310"/><circle cx="190" cy="86" r="5" fill="none" stroke="#666"/>
<!-- Contorno -->
<rect x="186" y="96" width="7" height="8" fill="#5a8fc6" stroke="#24476a"/><path d="M182.500 104.500h6v7h-6zM188.500 104.500h7v7h-7z" fill="#f5d56a" stroke="#8a5b00"/>
<!-- iCopy -->
<g fill="#5a8fc6" stroke="#1a3d60"><rect x="347.500" y="53.500" width="4.500" height="5"/><rect x="352.500" y="53.500" width="4.500" height="5"/><rect x="347.500" y="59.500" width="4.500" height="5"/><rect x="352.500" y="59.500" width="4.500" height="5"/></g><path d="M343 50v2M343 54v7M341 61h4" stroke="#1a3d60" fill="none" stroke-width="1.300"/>
<!-- Restringir -->
<rect x="430.500" y="49.500" width="15" height="12" fill="#a7c4e6" stroke="#3a5f8a"/><path d="M430 50v14h-2" stroke="#d92020" fill="none"/><rect x="415.500" y="65.500" width="14" height="12" fill="url(#grc)" stroke="#555"/><path d="M429.500 61v17" stroke="#d92020"/>
<!-- Ensamblar -->
<rect x="477.500" y="50.500" width="26" height="28" fill="url(#grc)" stroke="#555"/><path d="M477 57h12v10h6v11" fill="#fff" stroke="#555"/>
<rect x="474.500" y="48.500" width="18" height="10" fill="#8db2de" stroke="#d92020"/><path d="M492 51h3v8h-20" fill="none" stroke="#d92020"/>
<!-- Forzado -->
<path d="M526 50h6v7h-6z" fill="#e4e4e4" stroke="#444"/><path d="M534 64v-4a3 3 0 0 1 6 0v4" fill="none" stroke="#c42020" stroke-width="2.500"/>
<!-- Desplazar -->
<path d="M530 72v9M525.500 76.500h9" stroke="#222"/><path d="M530 71l-2 2h4zM530 82l-2-2h4zM525 76.500l2-2v4zM535 76.500l-2-2v4z" fill="#222"/><path d="M534 80h6v8h-6z" fill="#e4e4e4" stroke="#444"/>
<!-- Girar -->
<path d="M531 99a4 4 0 1 0 2 5" fill="none" stroke="#222"/><path d="M534 104h6v8h-6z" fill="#e4e4e4" stroke="#444"/>
<!-- Lista -->
<rect x="697.500" y="47.500" width="12" height="10" fill="#a7c4e6" stroke="#3a5f8a"/><path d="M703.500 47.500v10M697.500 52.500h12" stroke="#3a5f8a"/>
<path d="M697 60h9M697 65h9M697 70h9M697 75h9" stroke="#555"/><rect x="708.500" y="56.500" width="21" height="22" fill="#fff" stroke="#4a6a8f"/><path d="M708.500 61.500h21M708.500 66.500h21M708.500 71.500h21M715.500 56.500v22" stroke="#6a8cb0"/>
<!-- fx -->
<text x="763" y="72" font-family="Liberation Serif,serif" font-style="italic" font-size="36" fill="#333" textLength="18" lengthAdjust="spacingAndGlyphs">f</text>
<text x="778" y="77" font-family="Liberation Serif,serif" font-style="italic" font-size="20" fill="#333" textLength="12" lengthAdjust="spacingAndGlyphs">x</text>
<!-- iPart -->
<rect x="820.500" y="50.500" width="13" height="13" fill="#f4f4f4" stroke="#333"/><text x="824" y="61" font-family="Liberation Serif,serif" font-weight="bold" font-size="11" fill="#111">i</text><path d="M834 61v6M831 64h6" stroke="#1aa02a" stroke-width="2"/>
<!-- Excel -->
<g opacity=".4"><rect x="820.500" y="75.500" width="14" height="14" fill="#eee" stroke="#777"/><path d="M820.500 80h14M820.500 85h14M825 75.500v14M830 75.500v14" stroke="#888"/></g>
<g opacity=".4"><rect x="820.500" y="99.500" width="11" height="14" fill="#eee" stroke="#777"/><path d="M823 103h6M823 106h6M823 109h6" stroke="#777"/><path d="M829 112l6-7 1 1-6 7z" fill="#888"/></g>
<!-- Crear sustitutos -->
<path d="M1031 61l6-6h14v7l-7 3v13h-13z" fill="url(#grc)" stroke="#444"/><path d="M1037 55v17h14l-7 6M1037 72l-6 6" stroke="#444" fill="none"/><path d="M1044 66h7v6" fill="#ddd" stroke="#444"/>
<use href="#star" x="1055" y="54"/>
<!-- Plano -->
<rect x="1112.500" y="48.500" width="21" height="20" fill="url(#grc)" stroke="#666"/>
<rect x="1103.500" y="56.500" width="21" height="21" fill="url(#or)" stroke="#c66b22"/><path d="M1112.500 56.500v12h12" fill="none" stroke="#c66b22"/>
<!-- Eje -->
<rect x="1153.500" y="50.500" width="12" height="12" fill="#eee" stroke="#444"/><path d="M1150 66l12-14" stroke="#c96a10" stroke-width="1.500"/>
<!-- Punto -->
<path d="M1157 73l8 8-8 8-8-8z" fill="#f6c07a" stroke="#d0782a"/><circle cx="1157" cy="81" r="2.500" fill="#c15a12"/>
<!-- SCU -->
<path d="M1151 97v16l14 0" fill="none" stroke="#444"/><path d="M1151 113l11-11" stroke="#444"/><path d="M1151 95l-2 3h4zM1166 113l-3-2v4z" fill="#444"/><rect x="1150" y="112" width="3" height="3" fill="#1f6fc0"/>
<!-- Cable -->
<path d="M1234 55l6-5 14 22-4 6z" fill="url(#grc)" stroke="#666"/><path d="M1244 66l-4 12" stroke="#d92020" stroke-width="1.500"/><path d="M1246 66l4 12M1248 62l11 15" stroke="#2266c0" stroke-width="1.500" fill="none"/>
<circle cx="1253" cy="52" r="4" fill="#aac6e6" stroke="#3a5f8a"/><path d="M1257 48l6 4-6 4z" fill="#1a3d60"/>
<!-- Tubos -->
<path d="M1294 57H1314L1298 72H1320" fill="none" stroke="#666" stroke-width="11" stroke-linejoin="round"/>
<path d="M1294 57H1314L1298 72H1320" fill="none" stroke="#dcdcdc" stroke-width="9" stroke-linejoin="round"/>
<circle cx="1311" cy="51" r="4" fill="#aac6e6" stroke="#3a5f8a"/><path d="M1315 47l6 4-6 4z" fill="#1a3d60"/>
<!-- Convertir -->
<path d="M1369.500 50v27h21" fill="none" stroke="#666" stroke-width="1.500"/><rect x="1370" y="66" width="16" height="11" fill="#f29b5c"/><path d="M1378 68l11-16 4 3-10 16z" fill="#aaa" stroke="#777"/><use href="#star" x="1378" y="68"/>
<circle cx="1390" cy="77" r="4" fill="#b8a8d8" stroke="#5a3f8a"/><path d="M1394 73l6 4-6 4z" fill="#2a1a5a"/>

<!-- left panel -->
<rect x="0" y="137" width="247" height="882" fill="#f0f0f0"/>
<rect x="247" y="137" width="1" height="882" fill="#7a7a7a"/>
<path d="M3 142.500h225M3 144.500h225" stroke="#a8a8a8"/>
<path d="M234 142l6 6m0-6-6 6" stroke="#111" stroke-width="1.600"/>
<rect x="3" y="153" width="237" height="21" fill="#a9a9a9"/>
<text x="11" y="167" font-family="Liberation Serif,serif" font-weight="bold" font-size="12.500" fill="#f2f2f2" textLength="39" lengthAdjust="spacingAndGlyphs">Modelo</text>
<path d="M55 161h8l-4 4z" fill="#f0f0f0"/>
<rect x="226.500" y="156.500" width="12" height="12" rx="1" fill="#ffff66" stroke="#111"/><text x="232.500" y="166" text-anchor="middle" font-family="Liberation Sans,sans-serif" font-size="10" font-weight="bold" fill="#223a88">?</text><path d="M234 169l-1 3 3-3z" fill="#111"/>
<path d="M7 180h16l-6 7v7l-4-2v-5z" fill="#9a9a9a" stroke="#333"/>
<path d="M29.500 177v20" stroke="#aaa"/>
<path d="M44 180l6-3v6zM52 183h3" fill="#888" stroke="#555" stroke-width=".5"/><rect x="55" y="183" width="4" height="4" fill="#fff" stroke="#b01818"/><path d="M55 187l-2 2v1" fill="none" stroke="#b01818"/><rect x="50.500" y="189.500" width="3" height="3" fill="#fff" stroke="#b01818"/>
<text x="62" y="191" class="r" textLength="104" lengthAdjust="spacingAndGlyphs">Vista de ensamblaje</text>
<path d="M180 184h8l-4 4z" fill="#222"/>
<path d="M195 192l2-7 1-6h2.500l1 5 1 0 1-5h2.500l1 6 2 7h-6v-4h-1v4z" fill="#111" stroke="#111" stroke-width=".4"/>
<path d="M197 184l1.500-3M207 184l-1.500-3" stroke="#eee" stroke-width=".8"/>

<!-- tree -->
<rect x="3.500" y="201.500" width="239" height="790" fill="#fff" stroke="#808080"/>
<path d="M12.500 222v450" stroke="#808080"/>
<path d="M31.500 682v130" stroke="#808080"/>
<use href="#asm" x="11" y="204"/>
<text x="28.500" y="216" class="t" font-weight="bold" style="font-weight:bold">Cabeza.iam</text>

<path d="M12.500 232h11M12.500 252h11M12.500 272h11M12.500 292h11M12.500 312h11M12.500 332h11M12.500 352h11M12.500 372h11M12.500 392h11M12.500 412h11M12.500 432h11M12.500 452h11M12.500 472h11M12.500 492h11M12.500 512h11M12.500 532h11M12.500 552h11M12.500 572h11M12.500 592h11M12.500 612h11M12.500 632h11M12.500 652h11M12.500 672h11M31.500 692h11M31.500 712h11M31.500 732h11M31.500 752h11M31.500 772h11M31.500 792h11M31.500 812h11" stroke="#808080"/>

<use href="#pl" x="12.500" y="232"/><use href="#rep" x="28" y="224"/><text x="47" y="236" class="t">Representaciones</text>
<use href="#pl" x="12.500" y="252"/><use href="#fold" x="28" y="244"/><text x="47" y="256" class="t">Origen</text>
<use href="#pl" x="12.500" y="272"/><use href="#pin" x="28" y="264"/><text x="47" y="276" class="t">Tapa cabeza:1</text>
<use href="#pl" x="12.500" y="292"/><use href="#axis" x="28" y="284"/><text x="47" y="296" class="t">Eje de trabajo1</text>
<use href="#pl" x="12.500" y="312"/><use href="#part" x="28" y="304"/><text x="47" y="316" class="t">antena:1</text>
<use href="#pl" x="12.500" y="332"/><use href="#axis" x="28" y="324"/><text x="47" y="336" class="t">Eje de trabajo2</text>
<use href="#pl" x="12.500" y="352"/><use href="#part" x="28" y="344"/><text x="47" y="356" class="t">aro cabeza:1</text>
<use href="#pl" x="12.500" y="372"/><use href="#axis" x="28" y="364"/><text x="47" y="376" class="t">Eje de trabajo3</text>
<use href="#pl" x="12.500" y="392"/><use href="#part" x="28" y="384"/><text x="47" y="396" class="t">tapa baja cabeza:1</text>
<use href="#pl" x="12.500" y="412"/><use href="#part" x="28" y="404"/><text x="47" y="416" class="t">soporte central cabeza:1</text>
<use href="#pl" x="12.500" y="432"/><use href="#asm" x="28" y="424"/><text x="47" y="436" class="t" textLength="123.500" lengthAdjust="spacingAndGlyphs">carcasa eje cabeza-vaina:1</text>
<use href="#pl" x="12.500" y="452"/><use href="#part" x="28" y="444"/><text x="47" y="456" class="t">copeta brazo-cabeza:4</text>
<use href="#pl" x="12.500" y="472"/><use href="#part" x="28" y="464"/><text x="47" y="476" class="t">copeta brazo-cabeza:5</text>
<use href="#pl" x="12.500" y="492"/><use href="#part" x="28" y="484"/><text x="47" y="496" class="t">copeta brazo-cabeza:6</text>
<use href="#pl" x="12.500" y="512"/><use href="#part" x="28" y="504"/><text x="47" y="516" class="t">copeta brazo-cabeza:7</text>
<use href="#pl" x="12.500" y="532"/><use href="#asm" x="28" y="524"/><text x="47" y="536" class="t">hombro:1</text>
<use href="#pl" x="12.500" y="552"/><use href="#asm" x="28" y="544"/><text x="47" y="556" class="t">hombro:2</text>
<use href="#pl" x="12.500" y="572"/><use href="#asm" x="28" y="564"/><text x="47" y="576" class="t">hombro:3</text>
<use href="#pl" x="12.500" y="592"/><use href="#asm" x="28" y="584"/><text x="47" y="596" class="t">Brazo izquierdo:1</text>
<use href="#pl" x="12.500" y="612"/><use href="#asm" x="28" y="604"/><text x="47" y="616" class="t">Brazo izquierdo:2</text>
<use href="#pl" x="12.500" y="632"/><use href="#asm" x="28" y="624"/><text x="47" y="636" class="t">ojo:1</text>
<use href="#pl" x="12.500" y="652"/><use href="#asm" x="28" y="644"/><text x="47" y="656" class="t">ojo:2</text>
<use href="#mn" x="12.500" y="672"/><use href="#asm" x="28" y="664"/><text x="47" y="676" class="t">ojo:3</text>
<use href="#pl" x="31.500" y="692"/><use href="#rep" x="47" y="684"/><text x="66" y="696" class="t">Representaciones</text>
<use href="#pl" x="31.500" y="712"/><use href="#fold" x="47" y="704"/><text x="66" y="716" class="t">Origen</text>
<use href="#pl" x="31.500" y="732"/><use href="#pinp" x="47" y="724"/><text x="66" y="736" class="t">ojo:1</text>
<use href="#pl" x="31.500" y="752"/><use href="#part" x="47" y="744"/><text x="66" y="756" class="t">base ojos:1</text>
<use href="#pl" x="31.500" y="772"/><use href="#part" x="47" y="764"/><text x="66" y="776" class="t">iris:1</text>
<use href="#pl" x="31.500" y="792"/><use href="#part" x="47" y="784"/><text x="66" y="796" class="t">iris:2</text>
<use href="#pl" x="31.500" y="812"/><use href="#part" x="47" y="804"/><text x="66" y="816" class="t">iris:3</text>

<!-- status bar -->
<rect y="1019" width="1918" height="20" fill="url(#sb)"/>
<rect y="1019" width="1918" height="1" fill="#f6f6f6"/>
<text x="2" y="1036" class="r" style="fill:#111" textLength="25" lengthAdjust="spacingAndGlyphs">Listo</text>
<text x="1812" y="1036" class="r" style="fill:#111" textLength="13" lengthAdjust="spacingAndGlyphs">85</text>
<text x="1851" y="1036" class="r" style="fill:#111" textLength="12" lengthAdjust="spacingAndGlyphs">27</text>
<path d="M1843.500 1023v16M1881.500 1023v16" stroke="#d8d8d8"/>
<rect x="1884" y="1023" width="14" height="15" fill="#009000"/>
<rect x="1898" y="1023" width="20" height="15" fill="url(#pb)"/>
</svg>
</body></html>
